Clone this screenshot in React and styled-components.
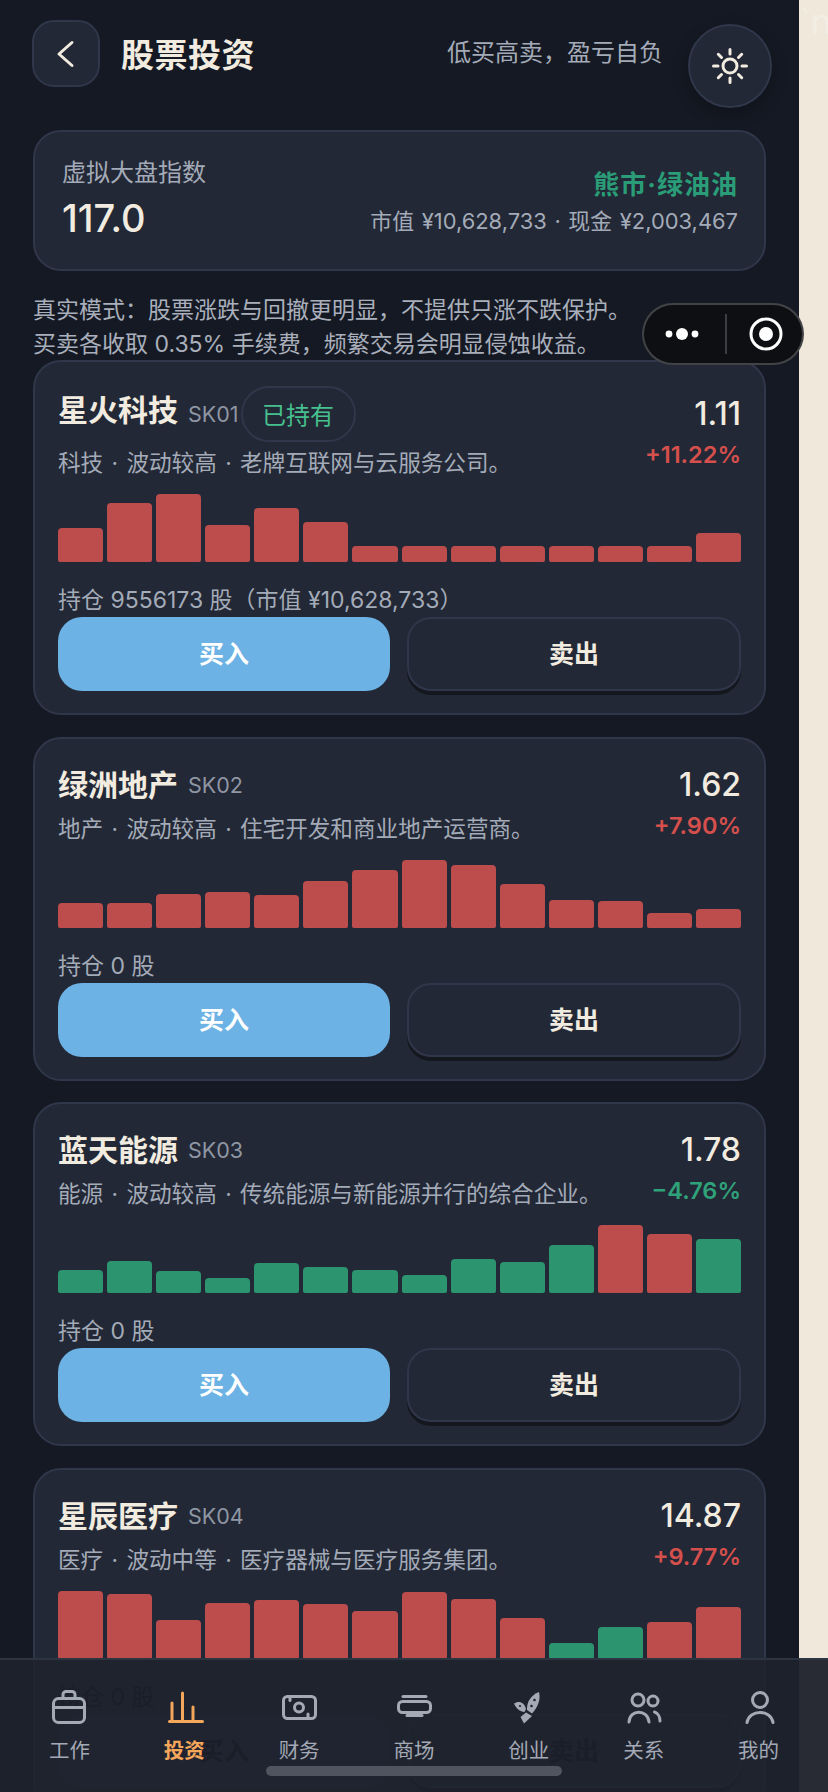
import React from 'react'
import styled, { createGlobalStyle } from 'styled-components'

const cream = '#f2ece0'
const cardBg = '#222835'
const line = '#30374a'
const red = '#bc4d4c'
const green = '#2d9470'

const GlobalStyle = createGlobalStyle`
  html, body {
    margin: 0;
    padding: 0;
    height: 100%;
    overflow: hidden;
    background: #efe8db;
  }
  body {
    font-family: Inter, "Noto Sans CJK SC", sans-serif;
  }
`

const Screen = styled.div`
  position: relative;
  display: flex;
  width: 828px;
  height: 1792px;
  overflow: hidden;
`

const Page = styled.div`
  flex: 0 0 799px;
  box-sizing: border-box;
  padding: 20px 33px 0;
  background: #151923;
`

const SideStrip = styled.div`
  flex: 1;
  padding: 2px 0 0 1px;
  overflow: hidden;
  background: linear-gradient(#efe8db 1658px, #6a6760 1658px);
  color: #f3eee4;
  font-size: 34px;
  line-height: 40px;
  white-space: nowrap;
`

const Header = styled.header`
  display: flex;
  align-items: flex-start;
  height: 87px;
  margin: 0 -6px 23px -1px;
`

const BackButton = styled.div`
  display: flex;
  align-items: center;
  justify-content: center;
  box-sizing: border-box;
  width: 68px;
  height: 67px;
  border: 2px solid ${line};
  border-radius: 22px;
  background: ${cardBg};
`

const Title = styled.h1`
  margin: 0 0 0 21px;
  font-size: 33px;
  font-weight: 700;
  line-height: 71px;
  letter-spacing: 0.5px;
  color: ${cream};
`

const Slogan = styled.div`
  margin: 0 25px 0 auto;
  font-size: 24px;
  line-height: 66px;
  color: #a4abb8;
`

const ThemeButton = styled.div`
  display: flex;
  align-items: center;
  justify-content: center;
  box-sizing: border-box;
  width: 84px;
  height: 84px;
  margin-top: 4px;
  border: 2px solid ${line};
  border-radius: 50%;
  background: ${cardBg};
  box-shadow: 0 6px 16px rgba(0, 0, 0, 0.25);
`

const IndexCard = styled.section`
  display: flex;
  align-items: center;
  justify-content: space-between;
  box-sizing: border-box;
  height: 141px;
  padding: 0 26px 0 27px;
  border: 2px solid ${line};
  border-radius: 28px;
  background: ${cardBg};
`

const IndexLeft = styled.div`
  padding-bottom: 6px;
`

const IndexLabel = styled.div`
  font-size: 24px;
  line-height: 34px;
  color: #a4abb8;
`

const IndexValue = styled.div`
  margin-top: 6px;
  font-size: 38px;
  font-weight: 500;
  line-height: 44px;
  color: ${cream};
`

const IndexRight = styled.div`
  display: flex;
  flex-direction: column;
  align-items: flex-end;
  padding-top: 5px;
`

const MarketMood = styled.div`
  font-size: 26px;
  font-weight: 700;
  line-height: 34px;
  letter-spacing: 1px;
  color: #2a9d78;
`

const MarketStats = styled.div`
  margin-top: 2px;
  font-size: 21.900px;
  line-height: 34px;
  word-spacing: 1.500px;
  color: #a4abb8;
`

const Notice = styled.p`
  margin: 22px 0 0;
  font-size: 23px;
  line-height: 34px;
  white-space: nowrap;
  color: #a9afbb;
`

const CardList = styled.div`
  display: flex;
  flex-direction: column;
  gap: 21.500px;
  margin-top: -1px;
`

const Card = styled.article`
  box-sizing: border-box;
  padding: 23px 23px 22px;
  border: 2px solid ${line};
  border-radius: 28px;
  background: ${cardBg};
`

const TopRow = styled.div`
  display: flex;
  align-items: center;
  justify-content: space-between;
`

const NameRow = styled.div`
  display: flex;
  align-items: center;
  height: ${(p) => (p.$held ? 57 : 46)}px;
`

const Name = styled.div`
  margin-bottom: ${(p) => (p.$held ? 7 : 0)}px;
  font-size: 30px;
  font-weight: 700;
  line-height: 40px;
  color: ${cream};
`

const Code = styled.span`
  margin-left: 10px;
  font-size: 21.500px;
  color: #8f96a4;
`

const HeldPill = styled.span`
  display: flex;
  align-items: center;
  justify-content: center;
  box-sizing: border-box;
  width: 115px;
  height: 56px;
  margin-left: 2px;
  border: 2px solid ${line};
  border-radius: 28px;
  font-size: 24px;
  color: #46c08e;
`

const Desc = styled.div`
  margin-top: 4px;
  font-size: 22.600px;
  line-height: 34px;
  word-spacing: 2px;
  white-space: nowrap;
  color: #a4abb8;
`

const Quote = styled.div`
  display: flex;
  flex-direction: column;
  align-items: flex-end;
  gap: 4px;
`

const Price = styled.div`
  font-size: 32px;
  font-weight: 500;
  line-height: 40px;
  color: ${cream};
`

const Change = styled.div`
  font-size: 23.500px;
  font-weight: 600;
  line-height: 34px;
  color: ${(p) => (p.$up ? '#d5504d' : '#2fa27a')};
`

const Chart = styled.div`
  display: flex;
  align-items: flex-end;
  gap: 4px;
  height: 68px;
  margin-top: 14px;
`

const Bar = styled.div`
  flex: 1;
  height: ${(p) => p.$h}px;
  border-radius: 4px 4px 2px 2px;
  background: ${(p) => (p.$green ? green : red)};
`

const Holding = styled.div`
  margin-top: 21px;
  font-size: 23px;
  line-height: 34px;
  color: ${(p) => (p.$under ? '#000' : '#a4abb8')};
`

const Actions = styled.div`
  display: grid;
  grid-template-columns: 332px 334px;
  gap: 17px;
`

const BuyButton = styled.div`
  height: 74px;
  border-radius: 24px;
  background: ${(p) => (p.$under ? '#2d3442' : '#6cb2e4')};
  font-size: 25px;
  font-weight: 700;
  line-height: 74px;
  text-align: center;
  color: ${(p) => (p.$under ? '#000' : '#fff')};
`

const SellButton = styled.div`
  box-sizing: border-box;
  height: 74px;
  border: 2px solid ${line};
  border-radius: 24px;
  background: ${cardBg};
  box-shadow: 0 4px 0 #14171e;
  font-size: 25px;
  font-weight: 700;
  line-height: 70px;
  text-align: center;
  color: ${(p) => (p.$under ? '#000' : cream)};
`

const Capsule = styled.div`
  position: absolute;
  top: 303px;
  left: 642px;
  display: flex;
  align-items: center;
  box-sizing: border-box;
  width: 162px;
  height: 62px;
  border: 2px solid rgba(255, 255, 255, 0.22);
  border-radius: 31px;
  background: #0d0f13;
`

const CapsuleDivider = styled.div`
  width: 2px;
  height: 40px;
  margin: 0 21px 0 19px;
  background: #3a3d42;
`

const TabBar = styled.nav`
  position: absolute;
  left: 0;
  right: 0;
  bottom: 0;
  display: grid;
  grid-template-columns: repeat(7, 1fr);
  box-sizing: border-box;
  height: 134px;
  padding: 27px 12px 0;
  border-top: 2px solid #2e3542;
  background: rgba(31, 34, 45, 0.88);
`

const Tab = styled.div`
  display: flex;
  flex-direction: column;
  align-items: center;
  color: ${(p) => (p.$active ? '#f4a65a' : '#a3a9b5')};
`

const TabLabel = styled.span`
  margin-top: 10px;
  font-size: 20.500px;
  font-weight: ${(p) => (p.$active ? 700 : 400)};
  line-height: 28px;
`

const HomeBar = styled.div`
  position: absolute;
  left: 266px;
  bottom: 16px;
  width: 296px;
  height: 10px;
  border-radius: 5px;
  background: #50545f;
`

const TabIcon = ({ children }) => (
  <svg
    width="40"
    height="40"
    viewBox="0 0 40 40"
    fill="none"
    stroke="currentColor"
    strokeWidth="3"
    strokeLinecap="round"
    strokeLinejoin="round"
  >
    {children}
  </svg>
)

const tabs = [
  {
    label: '工作',
    icon: (
      <>
        <rect x="4.500" y="11.500" width="31" height="24" rx="5" />
        <path d="M4.500 20.500h31" />
        <path d="M14 11V7.500a3 3 0 0 1 3-3h6a3 3 0 0 1 3 3V11" />
      </>
    ),
  },
  {
    label: '投资',
    active: true,
    icon: (
      <>
        <path d="M5.500 34.500h33" />
        <path d="M8 16v18" />
        <path d="M18.500 6v28" />
        <path d="M29 20v14" />
      </>
    ),
  },
  {
    label: '财务',
    icon: (
      <>
        <rect x="4.500" y="9.500" width="32" height="22" rx="4" />
        <circle cx="20" cy="20.500" r="4.500" />
        <path d="M11 11v2.500" />
        <path d="M29 27v2.500" />
      </>
    ),
  },
  {
    label: '商场',
    icon: (
      <>
        <rect x="4.500" y="14.500" width="32" height="11" rx="4" />
        <path d="M9 9.500h23" />
        <path d="M13 28.500h15" />
      </>
    ),
  },
  {
    label: '创业',
    icon: (
      <>
        <path
          d="M30 5C22 8 17.500 15 18 23L23 26.500C28.500 20.500 32 13 30 5Z"
          fill="currentColor"
          stroke="none"
        />
        <path
          d="M5 16.500C10 13 15.500 15.500 17 22L15.500 25C11 24.500 7 21.500 5 16.500Z"
          fill="currentColor"
          stroke="none"
        />
        <path d="M11.500 30L17 25.500L23 29L15 36.500Z" fill="currentColor" stroke="none" />
        <circle cx="25.500" cy="13" r="1.300" fill="#1f232e" stroke="none" />
        <circle cx="22.500" cy="19" r="1.300" fill="#1f232e" stroke="none" />
        <circle cx="11" cy="19" r="1.100" fill="#1f232e" stroke="none" />
      </>
    ),
  },
  {
    label: '关系',
    icon: (
      <>
        <circle cx="14" cy="13" r="6" />
        <circle cx="29" cy="14" r="5" />
        <path d="M5 35C5.500 22 24 22 25 35" />
        <path d="M30.500 25C34 26 36 30 36 34" />
      </>
    ),
  },
  {
    label: '我的',
    icon: (
      <>
        <circle cx="21" cy="13" r="7.500" />
        <path d="M8 35.500C10 22 32 22 34 35.500" />
      </>
    ),
  },
]

const stocks = [
  {
    name: '星火科技',
    code: 'SK01',
    held: true,
    desc: '科技 · 波动较高 · 老牌互联网与云服务公司。',
    price: '1.11',
    change: '+11.22%',
    up: true,
    holding: '持仓 9556173 股（市值 ¥10,628,733）',
    bars: [34, 59, 68, 37, 54, 40, 16, 16, 16, 16, 16, 16, 16, 29],
    greens: [],
  },
  {
    name: '绿洲地产',
    code: 'SK02',
    desc: '地产 · 波动较高 · 住宅开发和商业地产运营商。',
    price: '1.62',
    change: '+7.90%',
    up: true,
    holding: '持仓 0 股',
    bars: [25, 25, 34, 36, 33, 47, 58, 68, 63, 44, 28, 27, 15, 19],
    greens: [],
  },
  {
    name: '蓝天能源',
    code: 'SK03',
    desc: '能源 · 波动较高 · 传统能源与新能源并行的综合企业。',
    price: '1.78',
    change: '−4.76%',
    holding: '持仓 0 股',
    bars: [23, 32, 22, 15, 30, 26, 23, 18, 34, 31, 48, 68, 59, 54],
    greens: [0, 1, 2, 3, 4, 5, 6, 7, 8, 9, 10, 13],
  },
  {
    name: '星辰医疗',
    code: 'SK04',
    under: true,
    desc: '医疗 · 波动中等 · 医疗器械与医疗服务集团。',
    price: '14.87',
    change: '+9.77%',
    up: true,
    holding: '持仓 0 股',
    bars: [68, 65, 39, 56, 59, 55, 48, 67, 60, 41, 16, 32, 37, 52],
    greens: [10, 11],
  },
]

const StockCard = ({ stock }) => (
  <Card>
    <TopRow>
      <div>
        <NameRow $held={stock.held}>
          <Name $held={stock.held}>{stock.name}</Name>
          <Code>{stock.code}</Code>
          {stock.held && <HeldPill>已持有</HeldPill>}
        </NameRow>
        <Desc>{stock.desc}</Desc>
      </div>
      <Quote>
        <Price>{stock.price}</Price>
        <Change $up={stock.up}>{stock.change}</Change>
      </Quote>
    </TopRow>
    <Chart>
      {stock.bars.map((h, i) => (
        <Bar key={i} $h={h} $green={stock.greens.includes(i)} />
      ))}
    </Chart>
    <Holding $under={stock.under}>{stock.holding}</Holding>
    <Actions>
      <BuyButton $under={stock.under}>买入</BuyButton>
      <SellButton $under={stock.under}>卖出</SellButton>
    </Actions>
  </Card>
)

export default function App() {
  return (
    <Screen>
      <GlobalStyle />
      <Page>
        <Header>
          <BackButton>
            <svg width="30" height="30" viewBox="0 0 30 30" fill="none">
              <path
                d="M21 3.500L8 15L21 26.500"
                stroke={cream}
                strokeWidth="3"
                strokeLinecap="round"
                strokeLinejoin="round"
              />
            </svg>
          </BackButton>
          <Title>股票投资</Title>
          <Slogan>低买高卖，盈亏自负</Slogan>
          <ThemeButton>
            <svg width="40" height="40" viewBox="0 0 40 40" fill="none" stroke={cream} strokeWidth="3" strokeLinecap="round">
              <circle cx="20" cy="20" r="7" />
              <path d="M20 3.500V8M20 32v4.500M3.500 20H8M32 20h4.500M8.300 8.300l3.200 3.200M28.500 28.500l3.200 3.200M8.300 31.700l3.200-3.200M28.500 11.500l3.200-3.200" />
            </svg>
          </ThemeButton>
        </Header>

        <IndexCard>
          <IndexLeft>
            <IndexLabel>虚拟大盘指数</IndexLabel>
            <IndexValue>117.0</IndexValue>
          </IndexLeft>
          <IndexRight>
            <MarketMood>熊市·绿油油</MarketMood>
            <MarketStats>市值 ¥10,628,733 · 现金 ¥2,003,467</MarketStats>
          </IndexRight>
        </IndexCard>

        <Notice>
          真实模式：股票涨跌与回撤更明显，不提供只涨不跌保护。
          <br />
          买卖各收取 0.35% 手续费，频繁交易会明显侵蚀收益。
        </Notice>

        <CardList>
          {stocks.map((stock) => (
            <StockCard key={stock.code} stock={stock} />
          ))}
        </CardList>
      </Page>

      <SideStrip>`n</SideStrip>

      <Capsule>
        <svg width="62" height="20" viewBox="0 0 62 20" fill="#fff">
          <circle cx="25" cy="10" r="3.400" />
          <circle cx="38" cy="10" r="6" />
          <circle cx="51" cy="10" r="3.400" />
        </svg>
        <CapsuleDivider />
        <svg width="36" height="36" viewBox="0 0 36 36" fill="none">
          <circle cx="18" cy="18" r="15" stroke="#fff" strokeWidth="3" />
          <circle cx="18" cy="18" r="7" fill="#fff" />
        </svg>
      </Capsule>

      <TabBar>
        {tabs.map((tab) => (
          <Tab key={tab.label} $active={tab.active}>
            <TabIcon>{tab.icon}</TabIcon>
            <TabLabel $active={tab.active}>{tab.label}</TabLabel>
          </Tab>
        ))}
        <HomeBar />
      </TabBar>
    </Screen>
  )
}
